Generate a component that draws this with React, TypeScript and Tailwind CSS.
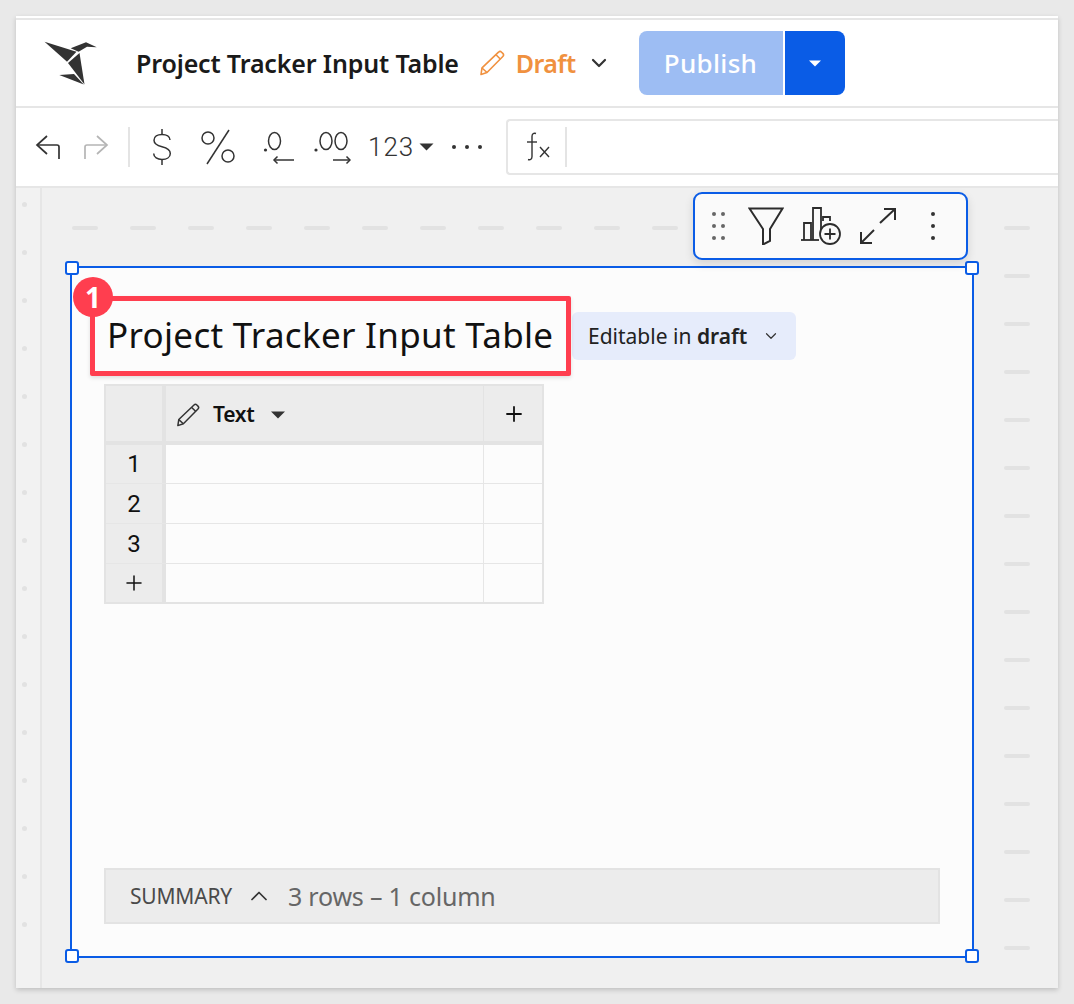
import React from 'react';
import { ChevronDown, ChevronUp, Plus } from 'lucide-react';

const sans = { fontFamily: '"Noto Sans", sans-serif' };
const rowLabels = ['1', '2', '3'];

const Caret = ({ className }: { className: string }) => (
  <svg viewBox="0 0 14 8" className={className} fill="currentColor">
    <path d="M0 0.5h14L7 7.5z" />
  </svg>
);

const Logo = () => (
  <svg width="54" height="46" viewBox="44 40 54 46" className="text-[#333]" fill="currentColor">
    <path d="M44.500 41.700 76.500 51.700 67 61.700z" />
    <path d="M79.500 53 84.500 84.500 68 63z" />
    <path d="M70.700 48.300 86 42.300 96.800 47.300 87 46.700 78.600 51.700z" />
    <path d="M59.300 75 74 74 83.800 84.500z" />
  </svg>
);

const Pencil = ({ className }: { className: string }) => (
  <svg viewBox="0 0 26 26" className={className} fill="none" stroke="currentColor" strokeWidth="1.6" strokeLinejoin="round">
    <path d="M19.500 2.200a2.200 2.200 0 0 1 3.100 0l1.200 1.200a2.200 2.200 0 0 1 0 3.100L8 22.500l-6 2 1-6.600z" />
    <path d="M3 18l5 4.500" />
    <path d="M17 4.800l4.500 4.500" />
  </svg>
);

const Handle = ({ className }: { className: string }) => (
  <span className={`absolute h-[14px] w-[14px] rounded-[3px] border-2 border-[#0a5ce6] bg-white ${className}`} />
);

const IconButtons = () => (
  <div className="flex items-center">
    <svg width="26" height="26" viewBox="0 0 26 26" fill="none" stroke="#333" strokeWidth="1.7" className="ml-[19px]">
      <path d="M12 2 2 11l10 9" />
      <path d="M2 11h20a2 2 0 0 1 2 2v12" />
    </svg>
    <svg width="26" height="26" viewBox="0 0 26 26" fill="none" stroke="#b5b5b5" strokeWidth="1.7" className="ml-[22px]">
      <path d="M14 2l10 9-10 9" />
      <path d="M24 11H4a2 2 0 0 0-2 2v12" />
    </svg>
    <span className="ml-[19px] h-[40px] w-[2px] bg-[#e4e4e4]" />
    {/* dollar */}
    <svg width="20" height="36" viewBox="0 0 20 36" fill="none" stroke="#333" strokeWidth="1.500" className="ml-[22px]">
      <path d="M18 11c0-3.500-3.500-5.500-8-5.500S2 7.500 2 11.200c0 3.600 3.200 5.300 8 6.500 5 1.200 8.300 3 8.300 6.800 0 3.900-3.800 6-8.300 6s-8.300-2.200-8.300-6" />
      <path d="M10 0v5.500M10 30.500V36" />
    </svg>
    {/* percent */}
    <svg width="36" height="36" viewBox="0 0 36 36" fill="none" stroke="#333" strokeWidth="1.500" className="ml-[28px]">
      <circle cx="8" cy="9" r="6" />
      <circle cx="28" cy="27" r="6" />
      <path d="M29 1 7 35" />
    </svg>
    {/* decrease decimals */}
    <svg width="32" height="36" viewBox="0 0 32 36" fill="none" stroke="#333" strokeWidth="1.500" className="ml-[27px]">
      <circle cx="2.500" cy="21" r="1.600" fill="#333" stroke="none" />
      <ellipse cx="11.500" cy="12" rx="6" ry="8.500" />
      <path d="M31 31H12" />
      <path d="M14.500 27.500 11 31l3.500 3.500" />
    </svg>
    {/* increase decimals */}
    <svg width="38" height="36" viewBox="0 0 38 36" fill="none" stroke="#333" strokeWidth="1.500" className="ml-[18px]">
      <circle cx="3" cy="21" r="1.600" fill="#333" stroke="none" />
      <ellipse cx="13" cy="12" rx="6" ry="8.500" />
      <ellipse cx="28" cy="12" rx="6" ry="8.500" />
      <path d="M20 31h17" />
      <path d="M33.500 27.500 37 31l-3.500 3.500" />
    </svg>
    <span className="ml-[17px] text-[26px] leading-none tracking-[1px] text-[#333]" style={{ fontFamily: 'Roboto, sans-serif', fontWeight: 300 }}>
      123
    </span>
    <Caret className="ml-[5px] h-[8px] w-[15px] text-[#333]" />
    <div className="ml-[18px] flex gap-[9px]">
      <span className="h-[4px] w-[4px] rounded-full bg-[#333]" />
      <span className="h-[4px] w-[4px] rounded-full bg-[#333]" />
      <span className="h-[4px] w-[4px] rounded-full bg-[#333]" />
    </div>
  </div>
);

const FloatingToolbar = () => (
  <div className="absolute left-[677px] top-[4px] z-10 flex h-[68px] w-[275px] items-center rounded-[9px] border-2 border-[#0a5ce6] bg-[#fafafa] shadow-[0_4px_10px_rgba(0,0,0,0.12)]">
    <div className="ml-[17px] grid grid-cols-2 gap-x-[5px] gap-y-[8px]">
      {[0, 1, 2, 3, 4, 5].map((d) => (
        <span key={d} className="h-[4px] w-[4px] rounded-full bg-[#666]" />
      ))}
    </div>
    <svg width="36" height="38" viewBox="0 0 36 38" fill="none" stroke="#2c2c2c" strokeWidth="2" className="ml-[23px]">
      <path d="M1.500 1.500h33L22 22v12l-7 3.500V22z" />
    </svg>
    <svg width="40" height="38" viewBox="0 0 40 38" fill="none" stroke="#2c2c2c" strokeWidth="1.800" className="ml-[17px]">
      <path d="M0 33h18" />
      <path d="M3 33V16h7v17" />
      <path d="M12 33V1h8v24" />
      <path d="M22 14v-4h7v4" />
      <circle cx="29" cy="27" r="10" fill="#fafafa" />
      <path d="M29 21.500v11M23.500 27h11" />
    </svg>
    <svg width="36" height="36" viewBox="0 0 36 36" fill="none" stroke="#2c2c2c" strokeWidth="2" className="ml-[19px]">
      <path d="M20 15 35 1" />
      <path d="M24 1h11v11" />
      <path d="M1 35 14 22" />
      <path d="M1 24v11h11" />
    </svg>
    <div className="ml-[35px] flex flex-col gap-[8px]">
      <span className="h-[4px] w-[4px] rounded-full bg-[#333]" />
      <span className="h-[4px] w-[4px] rounded-full bg-[#333]" />
      <span className="h-[4px] w-[4px] rounded-full bg-[#333]" />
    </div>
  </div>
);

const DataTable = () => (
  <div className="ml-[32px] mt-[8px] w-[440px] border-2 border-[#e3e3e3] text-[#111]">
    <div className="flex h-[59px] border-b-[4px] border-[#e3e3e3] bg-[#ececec]">
      <div className="w-[60px] border-r-[4px] border-[#e3e3e3]" />
      <div className="flex w-[318px] items-center border-r border-[#e3e3e3] pl-[10px] pt-[2px]">
        <Pencil className="h-[24px] w-[24px] text-[#333]" />
        <span className="ml-[13px] text-[21px] font-semibold leading-none tracking-[-0.3px]" style={sans}>
          Text
        </span>
        <Caret className="ml-[17px] h-[8px] w-[14px] text-[#333]" />
      </div>
      <div className="flex flex-1 items-center justify-center pl-[2px]">
        <Plus size={24} strokeWidth={1.8} />
      </div>
    </div>
    {rowLabels.concat('+').map((label, i) => (
      <div key={label} className={`flex bg-[#fcfcfc] ${i === 0 ? 'h-[39px] border-b border-[#e6e6e6]' : i < 3 ? 'h-[40px] border-b border-[#e6e6e6]' : 'h-[38px]'}`}>
        <div className="flex w-[60px] items-center justify-center border-r-[4px] border-[#e3e3e3] bg-[#ececec] text-[24px] leading-none" style={{ fontFamily: 'Roboto, sans-serif' }}>
          {label === '+' ? <Plus size={24} strokeWidth={1.5} /> : label}
        </div>
        <div className="w-[318px] border-r border-[#e6e6e6]" />
        <div className="flex-1" />
      </div>
    ))}
  </div>
);

export default function App() {
  return (
    <div className="min-h-[1004px] bg-[#e9e9e9] px-[16px] pt-[16px]" style={sans}>
      <div className="h-[972px] w-[1042px] overflow-hidden bg-white shadow-[0_2px_5px_rgba(0,0,0,0.18)]">
        <div className="mt-[2px] h-[2px] bg-[#e6e6e6]" />

        {/* Header */}
        <div className="flex h-[88px] items-center border-b-2 border-[#e6e6e6]">
          <div className="ml-[28px]">
            <Logo />
          </div>
          <h1 className="ml-[38px] text-[25px] font-semibold leading-none tracking-[-0.15px] text-[#1a1a1a]">Project Tracker Input Table</h1>
          <Pencil className="ml-[20px] h-[26px] w-[26px] text-[#f0913f]" />
          <span className="ml-[11px] text-[25px] font-semibold leading-none tracking-[-0.6px] text-[#f0913f]">Draft</span>
          <ChevronDown size={24} strokeWidth={2.200} className="ml-[11px] text-[#333]" />
          <div className="ml-[28px] flex h-[64px] text-white">
            <button className="w-[144px] rounded-l-[8px] bg-[#9dbdf3] text-[26px] font-medium tracking-[0.3px]">Publish</button>
            <button className="ml-[2px] flex w-[60px] items-center justify-center rounded-r-[8px] bg-[#0a5ce6]">
              <Caret className="h-[7px] w-[12px] text-white" />
            </button>
          </div>
        </div>

        {/* Format + formula bar */}
        <div className="flex h-[80px] items-center justify-between border-b-2 border-[#e6e6e6]">
          <IconButtons />
          <div className="flex h-[56px] w-[552px] items-center rounded-l-[4px] border-y-2 border-l-2 border-[#e6e6e6] bg-white">
            <svg width="28" height="30" viewBox="0 0 28 30" fill="none" stroke="#333" strokeWidth="1.400" className="ml-[16px]">
              <path d="M12 1.500c-2.500-.8-4 .5-4 3v20c0 2.500-1.500 3.700-4 3" />
              <path d="M3 10h10" />
              <path d="M16 15l9 10M25 15l-9 10" />
            </svg>
            <span className="ml-[13px] h-[40px] w-[2px] bg-[#e4e4e4]" />
          </div>
        </div>

        {/* Canvas */}
        <div className="relative flex h-[800px] bg-[#f0f0f0]">
          <div className="flex w-[26px] flex-col gap-[43px] border-r-2 border-[#e6e6e6] bg-[#f2f2f2] pl-[6px] pt-[14px]">
            {Array.from({ length: 16 }).map((_, i) => (
              <span key={i} className="h-[5px] w-[5px] shrink-0 rounded-full bg-[#e2e2e2]" />
            ))}
          </div>

          {/* Grid marks */}
          <div className="absolute left-[56px] top-[38px] flex gap-[32px]">
            {Array.from({ length: 11 }).map((_, i) => (
              <span key={i} className="h-[4px] w-[26px] rounded-full bg-[#e2e2e2]" />
            ))}
          </div>
          <div className="absolute left-[988px] top-[38px] flex flex-col gap-[44px]">
            {Array.from({ length: 16 }).map((_, i) => (
              <span key={i} className="h-[4px] w-[26px] shrink-0 rounded-full bg-[#e2e2e2]" />
            ))}
          </div>

          <FloatingToolbar />

          {/* Selected element */}
          <div className="relative z-[1] ml-[28px] mt-[78px] flex h-[692px] w-[904px] flex-col border-2 border-[#0a5ce6] bg-[#fcfcfc]">
            <Handle className="-left-[7px] -top-[7px]" />
            <Handle className="-right-[7px] -top-[7px]" />
            <Handle className="-bottom-[7px] -left-[7px]" />
            <Handle className="-bottom-[7px] -right-[7px]" />

            <div className="ml-[18px] mt-[28px] flex items-center">
              <div className="relative flex h-[80px] w-[481px] items-center rounded-[2px] border-[5px] border-[#ff3e4f] pb-[4px] pl-[12px] shadow-[0_2px_4px_rgba(0,0,0,0.12)]">
                <span className="absolute -left-[22px] -top-[24px] flex h-[40px] w-[40px] items-center justify-center rounded-full bg-[#ff3e4f] text-[28px] font-bold leading-none text-white">1</span>
                <span className="text-[35px] leading-none tracking-[0.3px] text-[#111]">Project Tracker Input Table</span>
              </div>
              <div className="ml-[1px] flex h-[48px] w-[224px] items-center rounded-[6px] bg-[#e6ecfb] pl-[16px] text-[21px] leading-none text-[#222]">
                <span>
                  Editable in <b className="font-semibold">draft</b>
                </span>
                <ChevronDown size={18} strokeWidth={1.600} className="ml-[15px] text-[#333]" />
              </div>
            </div>

            <DataTable />

            <div className="mb-[32px] ml-[32px] mt-auto flex h-[56px] w-[836px] items-center border-2 border-[#e3e3e3] bg-[#ececec] pl-[24px]">
              <span className="text-[21px] leading-none tracking-[-0.2px] text-[#4a4a4a]">SUMMARY</span>
              <ChevronUp size={28} strokeWidth={1.500} className="ml-[13px] text-[#333]" />
              <span className="ml-[15px] text-[25px] leading-none tracking-[-0.2px] text-[#666]">3 rows – 1 column</span>
            </div>
          </div>
        </div>
      </div>
    </div>
  );
}
